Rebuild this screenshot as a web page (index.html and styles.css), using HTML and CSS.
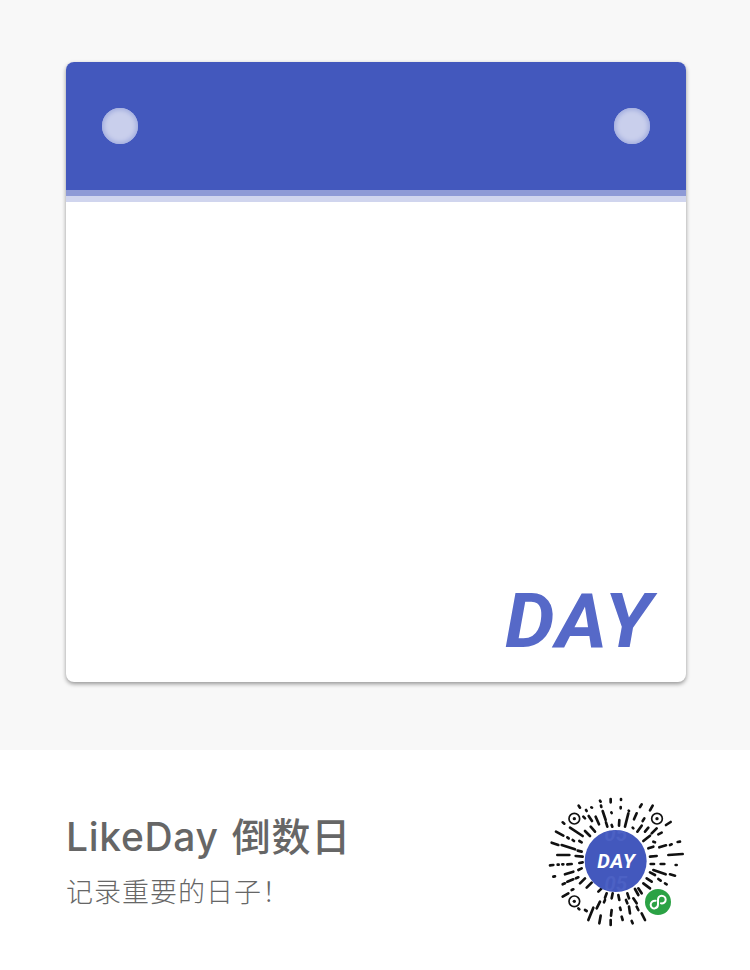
FILE: index.html
```html
<!DOCTYPE html>
<html lang="zh">
<head>
<meta charset="utf-8">
<title>LikeDay 倒数日</title>
<link rel="stylesheet" href="styles.css">
</head>
<body>
<main class="stage">
  <section class="card">
    <div class="card-head">
      <span class="hole"></span>
      <span class="hole"></span>
    </div>
    <div class="stripe stripe-a"></div>
    <div class="stripe stripe-b"></div>
    <div class="card-body"><span class="day">DAY</span></div>
  </section>
</main>
<footer class="foot">
  <div class="info">
    <h1 class="title">LikeDay 倒数日</h1>
    <p class="sub">记录重要的日子！</p>
  </div>
  <svg class="qr" viewBox="0 0 510 465" aria-label="小程序码">
    <defs><clipPath id="disc"><circle cx="257" cy="228" r="92"/></clipPath></defs>
    <g fill="none" stroke="#111" stroke-width="8" stroke-linecap="round">
      <circle cx="133" cy="101" r="16" stroke-width="5"/><circle cx="381" cy="101" r="16" stroke-width="5"/><circle cx="133" cy="349" r="16" stroke-width="5"/>
      <path d="M242 42l0 10M273 42v3M210 47l2 3M146 62l4 6M184 67l2 1M213 62l1 4M272 66v4M244 82l1 2M296 77l1 1M368 62l-8 14M335 58l-5 8M218 78l9 27M168 75l2 3M176 93l10 15M160 95l5 5M197 95l10 23M228 112l4 13M268 105l-1 17M295 85l-10 40M320 85l-8 18M343 100l-5 8M308 128l2 2M335 122l-13 18M245 120l2 5M98 112l5 4M408 120l14-9M120 128l38 25M182 125l13 15M165 138l15 15M355 128l-10 12M380 130l-15 15M360 152l-20 16M395 143l-10 5"/>
      <path d="M78 140l22 12M112 157l4 3M128 165l4 3M148 168l7 4M65 173l20 7M95 180l40 13M143 197l12 3M370 170l5 2M388 187l20-6M420 180l5-2M443 171l7-1M355 190l15-5M82 210h36M137 213l21 2M360 215l20-2M415 210l43-3M60 241l10-1M83 239h3M97 238h3M112 238l13-1M148 234l10-2M362 237h10M392 237h11M437 240h3M105 268l25-8M145 255l10-5M70 275l5-1M370 255l37 13M420 268l15 4M360 262l15 8"/>
      <path d="M98 298l7-3M112 290l18-7M138 280l7-3M150 295l15-15M350 280l15 10M385 282l7 5M405 295l5 3M170 308l15-15M340 295l20 15M98 335l17-10M125 315l5-2M205 320l10-10M325 310l10 15M315 312l10 18M230 325l-5 13M248 325l-3 15M265 330l3 15M292 325l5 15M210 350l-10 20M225 345l-3 7M288 345l4 10M310 340l10 15M245 375l-2 17M270 368l2 7M297 365l3 20M190 368l-15 37M212 392l-4 23M242 405v15M275 395l3 10M305 408l3 7M335 385l10 20M320 365l5 10M165 375l5 3M145 370l3 3"/>
    </g>
    <g fill="#111">
      <circle cx="133" cy="101" r="5"/><circle cx="381" cy="101" r="5"/><circle cx="133" cy="349" r="5"/>
    </g>
    <circle cx="257" cy="228" r="93" fill="#4358bd"/>
    <g clip-path="url(#disc)">
      <text class="qr-ghost" x="257" y="168" text-anchor="middle">05</text>
      <text class="qr-ghost" x="257" y="318" text-anchor="middle">05</text>
    </g>
    <text class="qr-day" x="259" y="250" text-anchor="middle">DAY</text>
    <circle cx="384" cy="351" r="39" fill="#2ba245"/>
    <path d="M377 347c-9-1-15 5-15 12 0 8 7 13 13 11 6-1 9-7 9-12v-14c0-6 4-12 11-12 7 0 12 6 12 12 0 8-7 12-14 11" fill="none" stroke="#fff" stroke-width="6" stroke-linecap="round"/>
  </svg>
</footer>
</body>
</html>
```

FILE: styles.css
```css
html, body {
  margin: 0;
  padding: 0;
  background: #fff;
}
body {
  width: 750px;
  height: 970px;
  overflow: hidden;
  font-family: Inter, "Noto Sans CJK SC", sans-serif;
}
.stage {
  height: 750px;
  box-sizing: border-box;
  padding: 62px 64px 0 66px;
  background: #f8f8f8;
}
.card {
  width: 620px;
  height: 620px;
  display: flex;
  flex-direction: column;
  background: #fff;
  border-radius: 8px;
  overflow: hidden;
  box-shadow: 0 2px 4px rgba(0, 0, 0, 0.4);
}
.card-head {
  height: 128px;
  flex: none;
  box-sizing: border-box;
  padding: 46px 36px 0;
  display: flex;
  justify-content: space-between;
  background: #4358bd;
}
.hole {
  width: 36px;
  height: 36px;
  border-radius: 50%;
  background: #c9cfec;
  box-shadow: inset 0 0 4px 2px #a3aedf;
}
.stripe {
  height: 6px;
  flex: none;
}
.stripe-a { background: #8e9ad6; }
.stripe-b { background: #d0d5ee; }
.card-body {
  flex: 1;
  display: flex;
  justify-content: flex-end;
  align-items: flex-end;
  padding: 0 32px 23px 0;
}
.day {
  font-family: Roboto, sans-serif;
  font-weight: 700;
  font-style: italic;
  font-size: 75px;
  line-height: 76px;
  letter-spacing: 2px;
  color: #5669c8;
  transform: scaleX(1.05);
  transform-origin: right center;
}
.foot {
  height: 220px;
  box-sizing: border-box;
  padding: 35px 50px 0 66px;
  display: flex;
  justify-content: space-between;
  align-items: flex-start;
  background: #fff;
}
.info {
  padding-top: 28px;
}
.title {
  margin: 0;
  font-size: 39px;
  line-height: 48px;
  font-weight: 500;
  color: #666;
  letter-spacing: 0.7px;
  word-spacing: 2px;
}
.sub {
  margin: 14px 0 0;
  font-size: 27px;
  line-height: 36px;
  font-weight: 300;
  color: #666;
  letter-spacing: 1px;
}
.qr {
  width: 170px;
  height: 155px;
}
.qr-day {
  font-family: Roboto, sans-serif;
  font-weight: 700;
  font-style: italic;
  font-size: 60px;
  letter-spacing: 2px;
  fill: #fff;
}
.qr-ghost {
  font-family: Roboto, sans-serif;
  font-weight: 700;
  font-style: italic;
  font-size: 62px;
  fill: #4c61c4;
}
```
